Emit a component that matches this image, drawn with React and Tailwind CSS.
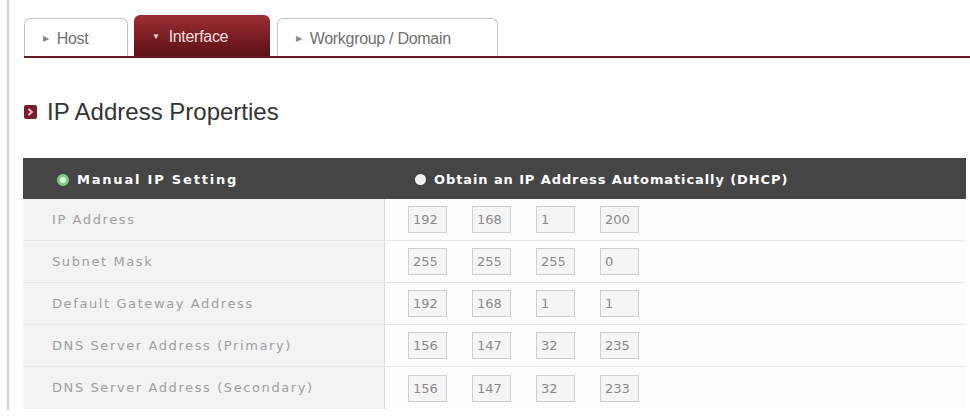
const rows = [
  { label: "IP Address", ip: ["192", "168", "1", "200"] },
  { label: "Subnet Mask", ip: ["255", "255", "255", "0"] },
  { label: "Default Gateway Address", ip: ["192", "168", "1", "1"] },
  { label: "DNS Server Address (Primary)", ip: ["156", "147", "32", "235"] },
  { label: "DNS Server Address (Secondary)", ip: ["156", "147", "32", "233"] },
];

function Tab({ label, active, width }) {
  if (active) {
    return (
      <div
        className={`${width} h-[41px] flex items-center pl-[18px] pt-[2px] rounded-t-[6px] bg-gradient-to-b from-[#9b2e33] to-[#5e1115] text-[#f6dede] text-[16px] tracking-[-0.3px]`}
      >
        <span className="text-[8px] mr-[9px]">▼</span>
        {label}
      </div>
    );
  }
  return (
    <div
      className={`${width} h-[38px] flex items-center pl-[18px] pt-[3px] rounded-t-[6px] border border-b-0 border-[#c4c4c4] bg-white text-[#707070] text-[16px] tracking-[-0.3px]`}
    >
      <span className="text-[8px] mr-[8px] text-[#888]">▶</span>
      {label}
    </div>
  );
}

function Octet({ value }) {
  return (
    <div className="w-[39px] h-[27px] border border-[#cfcfcf] bg-[#f5f5f5] text-[#8a8a8a] text-[13px] leading-[25px] pl-[4px]">
      {value}
    </div>
  );
}

export default function App() {
  return (
    <div className="w-[970px] h-[418px] bg-white flex font-['Liberation_Sans',sans-serif]">
      <div className="w-[7px]" />
      <div className="w-[2px] h-[410px] bg-[#d4d4d4]" />
      <div className="flex-1 pl-[15px]">
        {/* tab strip */}
        <div className="pt-[15px] flex items-end">
          <Tab label="Host" width="w-[104px]" />
          <div className="w-[6px]" />
          <Tab label="Interface" width="w-[136px]" active />
          <div className="w-[7px]" />
          <Tab label="Workgroup / Domain" width="w-[221px]" />
        </div>
        <div className="h-[2px] bg-[#6a1c20]" />

        {/* section title */}
        <div className="mt-[40px] flex items-center">
          <div className="w-[13px] h-[14px] rounded-[2px] bg-[#7a1d2a] flex items-center justify-center">
            <svg width="7" height="8" viewBox="0 0 7 8">
              <path d="M1.5 1 L5 4 L1.5 7" fill="none" stroke="#f3c9cf" strokeWidth="1.8" />
            </svg>
          </div>
          <h2 className="ml-[10px] text-[24px] text-[#333] leading-[28px]">IP Address Properties</h2>
        </div>

        {/* settings table */}
        <div className="mt-[32px] w-[943px] -ml-[1px] font-['DejaVu_Sans',sans-serif]">
          <div className="h-[41px] pt-[2px] bg-[#454545] flex items-center text-white font-bold text-[13px]">
            <div className="w-[362px] flex items-center pl-[34px] tracking-[1.8px]">
              <span className="w-[12px] h-[12px] rounded-full border-[3px] border-[#7ccf7c] bg-[#e6f5e6] mr-[8px]" />
              Manual IP Setting
            </div>
            <div className="flex items-center pl-[30px] tracking-[0.9px]">
              <span className="w-[11px] h-[11px] rounded-full bg-[#f2f2f2] mr-[8px]" />
              Obtain an IP Address Automatically (DHCP)
            </div>
          </div>
          {rows.map((r, i) => (
            <div
              key={r.label}
              className={`h-[42px] flex ${i < rows.length - 1 ? "border-b border-[#e6e6e6]" : ""}`}
            >
              <div className="w-[362px] bg-[#f3f3f3] border-r border-[#dcdcdc] flex items-center pl-[29px] text-[13px] tracking-[1.6px] text-[#a0a0a0]">
                {r.label}
              </div>
              <div className="flex-1 bg-[#fdfdfd] flex items-center pl-[23px] gap-[25px]">
                {r.ip.map((v, j) => (
                  <Octet key={j} value={v} />
                ))}
              </div>
            </div>
          ))}
        </div>
      </div>
    </div>
  );
}
